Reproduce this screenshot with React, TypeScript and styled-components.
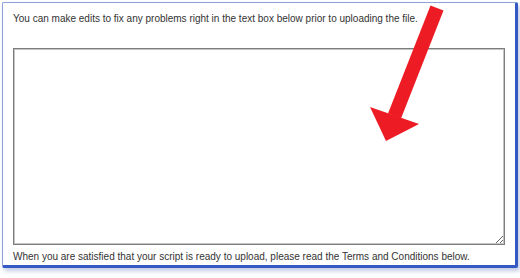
import styled, { createGlobalStyle } from 'styled-components'

const GlobalStyle = createGlobalStyle`
  html, body {
    margin: 0;
    padding: 0;
    background: #ffffff;
  }
  body {
    font-family: "Liberation Sans", Arial, sans-serif;
  }
`

function App() {
  return (
    <Page>
      <GlobalStyle />
      <Frame>
        <Note>You can make edits to fix any problems right in the text box below prior to uploading the file.</Note>
        <ScriptBox spellCheck={false} />
        <Note>When you are satisfied that your script is ready to upload, please read the Terms and Conditions below.</Note>
      </Frame>
      <Arrow width="520" height="278" viewBox="0 0 520 278">
        <polygon points="430.5,5.5 443.5,10.5 401,118.5 388,113.5" fill="#ed1c24" />
        <polygon points="370,107 419,124 386,141" fill="#ed1c24" />
      </Arrow>
    </Page>
  )
}

const Page = styled.div`
  position: relative;
  width: 520px;
  height: 278px;
  padding: 2px 0 0 2px;
  box-sizing: border-box;
`
const Frame = styled.div`
  width: 516px;
  height: 266px;
  box-sizing: border-box;
  border-top: 1px solid #8ea2d9;
  border-left: 1px solid #8ea2d9;
  border-right: 3px solid #3559c2;
  border-bottom: 3px solid #3559c2;
  border-radius: 2px;
  box-shadow: 2px 3px 4px rgba(80, 100, 180, 0.35);
  padding: 9px 10px 0 10px;
  display: flex;
  flex-direction: column;
`
const Note = styled.p`
  margin: 0;
  font-size: 10px;
  line-height: 14px;
  color: #333333;
  white-space: nowrap;
`
const ScriptBox = styled.textarea`
  margin: 22px 0 5px 0;
  height: 197px;
  width: 100%;
  box-sizing: border-box;
  border: 1px solid #7d7d7d;
  box-shadow: inset 1px 1px 0 #c4c4c4, inset -1px -1px 0 #c4c4c4;
  background: #ffffff;
  outline: none;
  resize: both;
`
const Arrow = styled.svg`
  position: absolute;
  left: 0;
  top: 0;
  pointer-events: none;
`

export default App
